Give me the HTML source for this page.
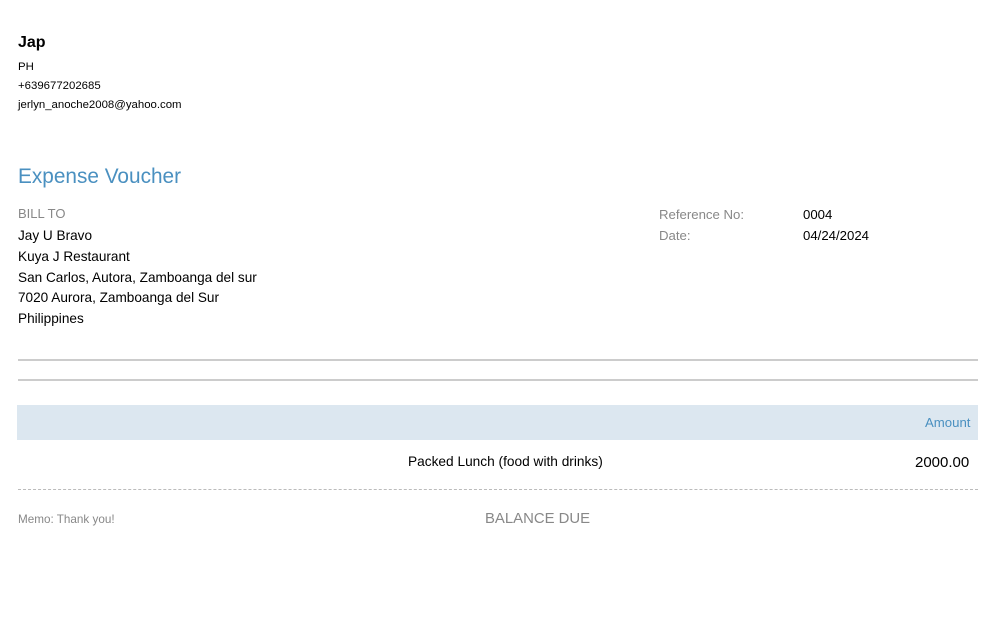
<!DOCTYPE html>
<html><head><meta charset="utf-8"><style>
*{margin:0;padding:0;box-sizing:border-box}
body{width:993px;height:626px;background:#fff;font-family:"Liberation Sans",Arial,sans-serif;color:#000;position:relative;overflow:hidden}
.a{position:absolute;white-space:nowrap}
</style></head><body>
<div class="a" style="left:18px;top:34px;font-size:16px;font-weight:bold">Jap</div>
<div class="a" style="left:18px;top:61px;font-size:11.4px">PH</div>
<div class="a" style="left:18px;top:80px;font-size:11.4px">+639677202685</div>
<div class="a" style="left:18px;top:99px;font-size:11.4px">jerlyn_anoche2008@yahoo.com</div>
<div class="a" style="left:18px;top:165px;font-size:20.8px;color:#4a90c0">Expense Voucher</div>
<div class="a" style="left:18px;top:206px;font-size:13px;color:#888">BILL TO</div>
<div class="a" style="left:18px;top:226px;font-size:13.6px;line-height:20.8px">Jay U Bravo<br>Kuya J Restaurant<br>San Carlos, Autora, Zamboanga del sur<br>7020 Aurora, Zamboanga del Sur<br>Philippines</div>
<div class="a" style="left:659px;top:204px;font-size:13.2px;color:#888;line-height:21px">Reference No:<br>Date:</div>
<div class="a" style="left:803px;top:204px;font-size:13.2px;line-height:21px">0004<br>04/24/2024</div>
<div class="a" style="left:18px;top:359px;width:960px;height:2px;background:#ccc"></div>
<div class="a" style="left:18px;top:379px;width:960px;height:2px;background:#ccc"></div>
<div class="a" style="left:17px;top:405px;width:961px;height:35px;background:#dce7f0"></div>
<div class="a" style="left:925px;top:415px;font-size:13.2px;color:#4a90c0">Amount</div>
<div class="a" style="left:408px;top:454px;font-size:13.7px">Packed Lunch (food with drinks)</div>
<div class="a" style="left:915px;top:454px;font-size:15px">2000.00</div>
<div class="a" style="left:18px;top:489px;width:960px;border-top:1px dashed #bbb"></div>
<div class="a" style="left:18px;top:513px;font-size:11.7px;color:#888">Memo: Thank you!</div>
<div class="a" style="left:485px;top:511px;font-size:14.9px;color:#888">BALANCE DUE</div>
</body></html>
